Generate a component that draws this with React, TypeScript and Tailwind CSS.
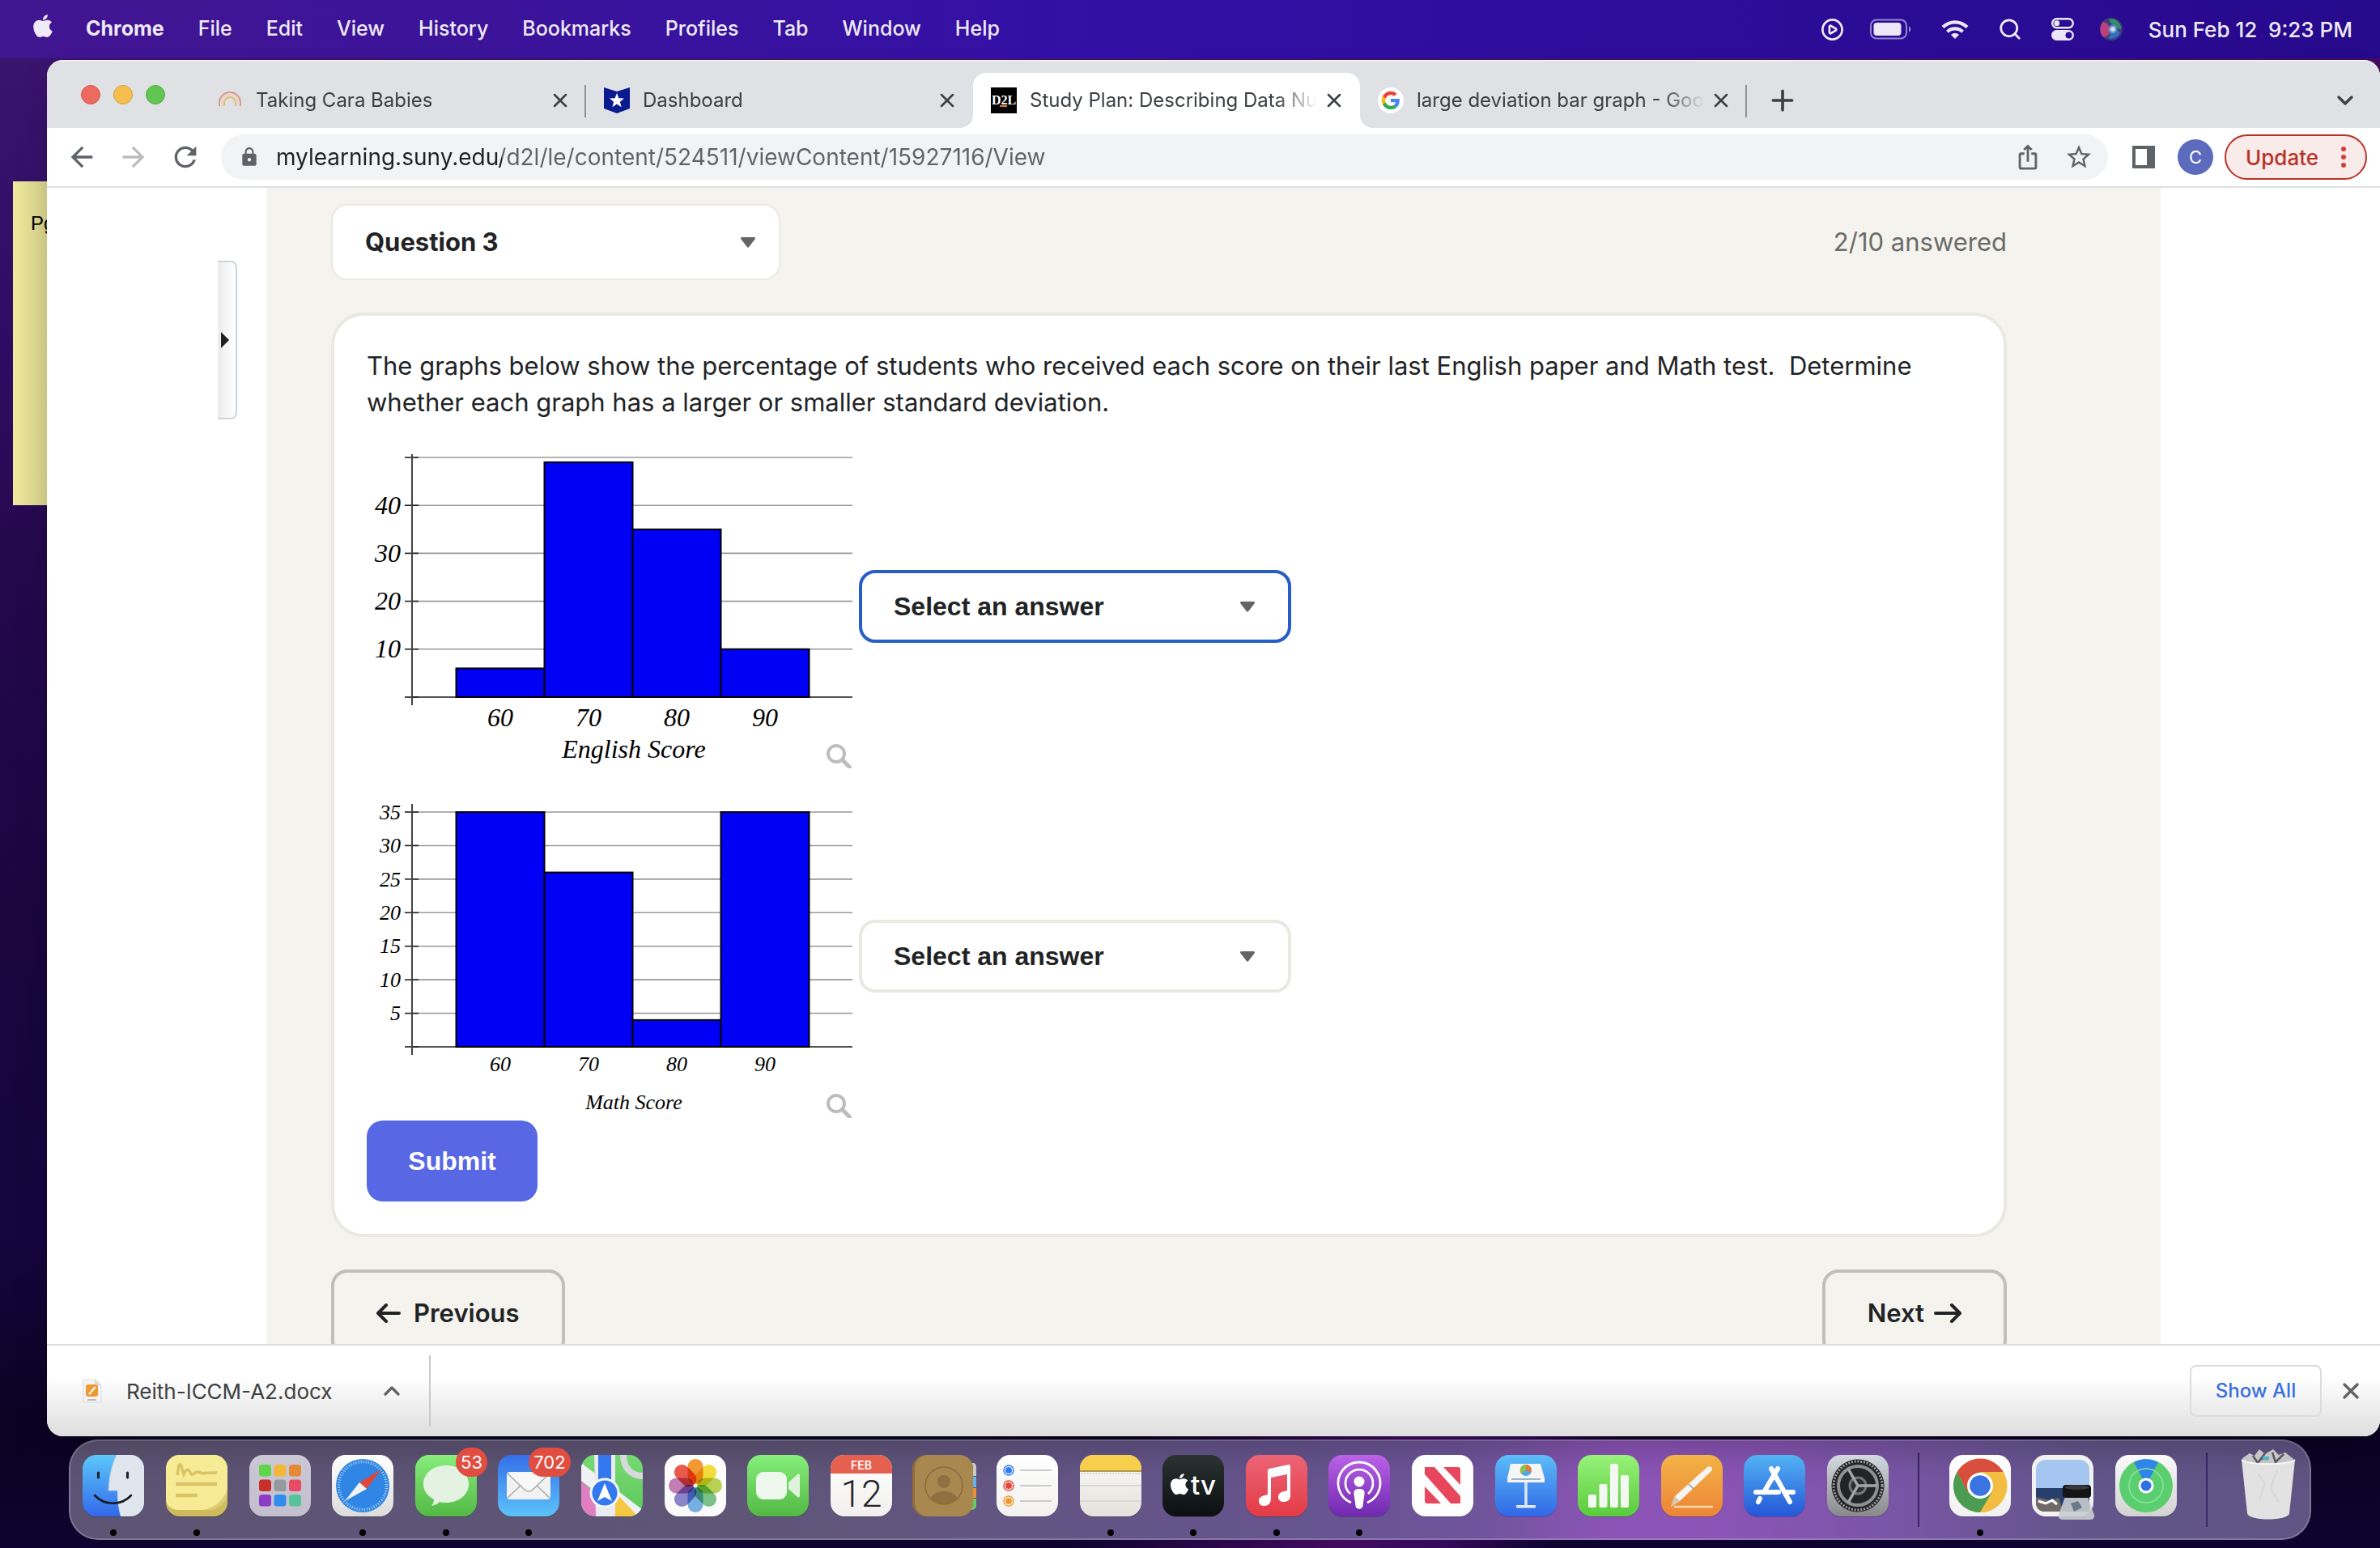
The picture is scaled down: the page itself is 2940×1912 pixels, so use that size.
import React from 'react';
import { ChevronDown, ChevronUp, CirclePlay, Plus, Search, X } from 'lucide-react';
import { FaApple } from 'react-icons/fa';
import { MdArrowBack, MdArrowForward, MdIosShare, MdLock, MdRefresh, MdStarOutline } from 'react-icons/md';

const menus = ['File', 'Edit', 'View', 'History', 'Bookmarks', 'Profiles', 'Tab', 'Window', 'Help'];

/* ---------- menu bar ---------- */

const BatteryIcon = () => (
  <svg width="52" height="26" viewBox="0 0 52 26" fill="none">
    <rect x="1" y="1.500" width="44" height="23" rx="7" stroke="#fff" strokeOpacity="0.5" strokeWidth="2" />
    <rect x="4.500" y="5" width="34" height="16" rx="4" fill="#ebe7f6" />
    <path d="M48 9.500c3 1 3 6 0 7z" fill="#fff" fillOpacity="0.5" />
  </svg>
);

const WifiIcon = () => (
  <svg width="34" height="25" viewBox="0 0 34 25" fill="none" stroke="#ebe7f6" strokeWidth="4.200">
    <path d="M2 9.500C10.500 1.200 23.500 1.200 32 9.500" />
    <path d="M7.500 15.200c5.400-5 13.600-5 19 0" />
    <path d="M17 24l-5-5c2.800-2.600 7.200-2.600 10 0z" fill="#ebe7f6" stroke="none" />
  </svg>
);

const ControlCenterIcon = () => (
  <svg width="28" height="28" viewBox="0 0 28 28" fill="none">
    <rect x="1.200" y="1.200" width="25.600" height="11" rx="5.500" stroke="#ebe7f6" strokeWidth="2.400" />
    <circle cx="6.800" cy="6.700" r="3.400" fill="#ebe7f6" />
    <rect y="15" width="28" height="13" rx="6.500" fill="#ebe7f6" />
    <circle cx="21.500" cy="21.500" r="4" fill="#2a0a98" />
  </svg>
);

const SiriIcon = () => (
  <svg width="28" height="28" viewBox="0 0 28 28">
    <defs>
      <radialGradient id="siri-glow">
        <stop offset="0" stopColor="#fff" />
        <stop offset="0.35" stopColor="#9fd3f5" stopOpacity="0.9" />
        <stop offset="1" stopColor="#2b3f8e" stopOpacity="0" />
      </radialGradient>
    </defs>
    <circle cx="14" cy="14" r="14" fill="#3c3f77" />
    <path d="M4 5A13 13 0 0 0 5 24c6-2 9-6 8-10S8 6 4 5z" fill="#d6417f" fillOpacity="0.85" />
    <path d="M11 1.500c9-2 16 6 15 13-5-2-12-5-15-13z" fill="#2f9d6a" fillOpacity="0.85" />
    <path d="M13 15c5-1 10 0 12 3-3 7-10 9-15 7 3-3 4-6 3-10z" fill="#2c7bd0" fillOpacity="0.85" />
    <circle cx="16" cy="14" r="8" fill="url(#siri-glow)" />
  </svg>
);

const MenuBar = () => (
  <header className="flex h-[72px] shrink-0 items-center bg-linear-to-r from-[#421590] via-[#3310a6] via-45% to-[#27098c] pl-10 pr-[34px] text-[25px] text-[#efebf8]">
    <FaApple className="mr-10 -mt-2 h-[32px] w-[26px]" />
    <nav className="flex items-center gap-[42px]">
      <button className="font-bold">Chrome</button>
      {menus.map((m) => (
        <button key={m} className="font-medium">{m}</button>
      ))}
    </nav>
    <div className="ml-auto flex items-center">
      <CirclePlay size={29} strokeWidth={2.2} className="mr-8" />
      <span className="mr-9"><BatteryIcon /></span>
      <span className="mr-9"><WifiIcon /></span>
      <Search size={30} strokeWidth={2.2} className="mr-9" />
      <span className="mr-8"><ControlCenterIcon /></span>
      <span className="mr-8"><SiriIcon /></span>
      <span className="whitespace-pre text-[26px] font-medium">Sun Feb 12  9:23 PM</span>
    </div>
  </header>
);

/* ---------- browser tabs ---------- */

const RainbowFavicon = () => (
  <svg width="32" height="32" viewBox="0 0 32 32" fill="none" strokeWidth="2">
    <path d="M3 23v-4a13 13 0 0 1 26 0v4" stroke="#dc9a86" />
    <path d="M6 23v-4a10 10 0 0 1 20 0v4" stroke="#eed3c2" />
    <path d="M9 23v-4a7 7 0 0 1 14 0v4" stroke="#e2bd80" />
  </svg>
);

const StarFavicon = () => (
  <svg width="32" height="32" viewBox="0 0 32 32">
    <path d="M0 0l16 5 16-5v26l-16 6-16-6z" fill="#0a1a8f" />
    <path d="M16 7l2.400 6.200 6.600.3-5.100 4.200 1.700 6.500L16 20.500l-5.600 3.700 1.700-6.500L7 13.500l6.600-.3z" fill="#fff" />
  </svg>
);

const D2LFavicon = () => (
  <svg width="32" height="32" viewBox="0 0 32 32">
    <rect width="32" height="32" fill="#000" />
    <text x="16" y="21" fontSize="16" fontWeight="700" fill="#fff" textAnchor="middle" className="font-['Liberation_Serif',serif]">D2L</text>
    <rect x="11" y="22" width="9" height="2" fill="#e8792b" />
  </svg>
);

const GoogleFavicon = () => (
  <svg width="32" height="32" viewBox="-10 -10 68 68">
    <circle cx="24" cy="24" r="34" fill="#fff" />
    <path fill="#EA4335" d="M24 9.500c3.540 0 6.710 1.220 9.210 3.600l6.850-6.850C35.900 2.380 30.470 0 24 0 14.620 0 6.510 5.380 2.560 13.220l7.980 6.190C12.430 13.720 17.740 9.500 24 9.500z" />
    <path fill="#4285F4" d="M46.980 24.550c0-1.570-.15-3.090-.38-4.550H24v9.020h12.940c-.58 2.960-2.260 5.480-4.780 7.180l7.730 6c4.510-4.180 7.090-10.360 7.090-17.650z" />
    <path fill="#FBBC05" d="M10.530 28.590c-.48-1.450-.76-2.990-.76-4.590s.27-3.140.76-4.590l-7.980-6.190C.92 16.460 0 20.120 0 24c0 3.880.92 7.540 2.560 10.780l7.970-6.190z" />
    <path fill="#34A853" d="M24 48c6.480 0 11.930-2.130 15.890-5.810l-7.730-6c-2.150 1.450-4.920 2.300-8.160 2.300-6.260 0-11.570-4.220-13.470-9.910l-7.980 6.190C6.510 42.620 14.620 48 24 48z" />
  </svg>
);

interface BrowserTab {
  title: string;
  icon: React.ReactNode;
  active?: boolean;
  divider?: boolean;
}

const tabs: BrowserTab[] = [
  { title: 'Taking Cara Babies', icon: <RainbowFavicon />, divider: true },
  { title: 'Dashboard', icon: <StarFavicon /> },
  { title: 'Study Plan: Describing Data Nu', icon: <D2LFavicon />, active: true },
  { title: 'large deviation bar graph - Goo', icon: <GoogleFavicon />, divider: true },
];

const TabFlare = ({ side }: { side: 'left' | 'right' }) => (
  <svg
    width="16"
    height="16"
    viewBox="0 0 16 16"
    className={side === 'left' ? 'absolute bottom-0 right-full' : 'absolute bottom-0 left-full'}
  >
    <path d={side === 'left' ? 'M16 0v16H0C9 16 16 9 16 0z' : 'M0 0v16h16C7 16 0 9 0 0z'} fill="#fff" />
  </svg>
);

const TabStrip = () => (
  <div className="flex h-[84px] shrink-0 items-center border-t-2 border-[#f0f0f2] bg-[#dfe1e5] pl-[42px] pr-[27px]">
    <div className="flex w-[146px] shrink-0 gap-4">
      <button aria-label="Close window" className="h-6 w-6 rounded-full border border-[#d8574c] bg-[#ed6a5e]" />
      <button aria-label="Minimize window" className="h-6 w-6 rounded-full border border-[#dba03a] bg-[#f5bf4f]" />
      <button aria-label="Zoom window" className="h-6 w-6 rounded-full border border-[#4fae3d] bg-[#61c554]" />
    </div>
    {tabs.map((tab) => (
      <div
        key={tab.title}
        className={`relative mt-3.5 flex h-[68px] w-[478px] items-center pl-[22px] pr-[18px] text-[#3c4043] ${tab.active ? 'rounded-t-2xl bg-white' : ''}`}
      >
        {tab.icon}
        <span className="ml-4 flex-1 whitespace-nowrap text-[24px] [mask-image:linear-gradient(to_right,#000_84%,transparent_98%)]">
          {tab.title}
        </span>
        <button aria-label={`Close ${tab.title}`}>
          <X size={28} strokeWidth={2.2} />
        </button>
        {tab.active && <TabFlare side="left" />}
        {tab.active && <TabFlare side="right" />}
        {tab.divider && <span className="absolute right-0 top-[15px] h-10 w-0.5 bg-[#8f9195]" />}
      </div>
    ))}
    <button aria-label="New tab" className="ml-6 mt-3.5 text-[#3c4043]">
      <Plus size={40} strokeWidth={2.2} />
    </button>
    <button aria-label="Search tabs" className="ml-auto mt-3.5 text-[#3c4043]">
      <ChevronDown size={32} strokeWidth={2.5} />
    </button>
  </div>
);

const Toolbar = () => (
  <div className="flex h-[74px] shrink-0 items-center border-b-2 border-[#dcdfe0] bg-white pl-[23px] pr-4 text-[#5f6368]">
    <div className="mr-6 flex gap-6">
      <button aria-label="Back"><MdArrowBack size={40} /></button>
      <button aria-label="Forward" className="text-[#babcbe]"><MdArrowForward size={40} /></button>
      <button aria-label="Reload"><MdRefresh size={40} /></button>
    </div>
    <div className="flex h-14 flex-1 items-center rounded-full bg-[#f1f3f4] pl-[22px] pr-[18px]">
      <MdLock size={26} />
      <input
        aria-label="Address"
        defaultValue="mylearning.suny.edu/d2l/le/content/524511/viewContent/15927116/View"
        className="ml-5 h-full flex-1 bg-[linear-gradient(to_right,#202124_279px,#5f6368_279px)] bg-clip-text text-[28px] text-transparent outline-none"
      />
      <button aria-label="Share" className="mr-7"><MdIosShare size={34} /></button>
      <button aria-label="Bookmark"><MdStarOutline size={36} /></button>
    </div>
    <button aria-label="Side panel" className="ml-[30px]">
      <svg width="28" height="28" viewBox="0 0 28 28">
        <path d="M0 0h28v28H0zM4 4v20h14V4z" fill="#5f6368" fillRule="evenodd" />
      </svg>
    </button>
    <button className="ml-7 h-11 w-11 rounded-full bg-[#5c6bbd] text-[22px] text-white">C</button>
    <button className="ml-3.5 flex h-14 w-44 items-center justify-between rounded-full border-2 border-[#b93126] bg-[#f9ebea] pl-6 pr-6 text-[26px] font-medium text-[#b93126]">
      Update
      <svg width="6" height="28" viewBox="0 0 6 28" fill="#d33f33">
        <circle cx="3" cy="4" r="3" />
        <circle cx="3" cy="14" r="3" />
        <circle cx="3" cy="24" r="3" />
      </svg>
    </button>
  </div>
);

/* ---------- question page ---------- */

interface HistogramProps {
  title: string;
  values: number[];
  step: number;
  max: number;
  top: number;
  bottom: number;
  axisTop: number;
  fontSize: number;
  lastLabel: number;
  labelY: number;
  titleY: number;
}

const Histogram: React.FC<HistogramProps> = ({ title, values, step, max, top, bottom, axisTop, fontSize, lastLabel, labelY, titleY }) => {
  const axisX = 56;
  const barWidth = 109;
  const y = (v: number) => bottom - (v / max) * (bottom - top);
  const ticks = Array.from({ length: max / step + 1 }, (_, i) => i * step);

  return (
    <svg width="600" height="400" viewBox="0 0 600 400" fontSize={fontSize} className="shrink-0 font-['Liberation_Serif',serif] italic">
      {ticks.map((t) => (
        <g key={t}>
          <path d={`M${axisX} ${y(t)}H600`} stroke={t === 0 ? '#555' : '#999'} strokeWidth={t === 0 ? 2 : 1.6} />
          <path d={`M47 ${y(t)}h17`} stroke="#222" strokeWidth="1.600" />
          {t > 0 && t <= lastLabel && (
            <text x="42" y={y(t) + fontSize / 3} textAnchor="end">{t}</text>
          )}
        </g>
      ))}
      <path d={`M${axisX} ${axisTop}V${bottom + 10}`} stroke="#444" strokeWidth="2" />
      {values.map((v, i) => (
        <g key={i}>
          <rect x={110.5 + i * barWidth} y={y(v)} width={barWidth} height={bottom - y(v)} fill="#0000f5" stroke="#000" strokeWidth="2" />
          <text x={165 + i * barWidth} y={labelY} textAnchor="middle">{60 + i * 10}</text>
        </g>
      ))}
      <text x="330" y={titleY} textAnchor="middle">{title}</text>
      <circle cx="580" cy={382} r="10" fill="none" stroke="#bdbdbd" strokeWidth="4" />
      <path d="M587 389l11 11" stroke="#bdbdbd" strokeWidth="5" />
    </svg>
  );
};

const Caret = () => (
  <svg width="18" height="13" viewBox="0 0 18 13">
    <path d="M1.500 0h15c1.200 0 1.800 1.200 1.200 2.200L10.200 12c-.6.9-1.800.9-2.400 0L.3 2.200C-.3 1.200.300 0 1.500 0z" fill="#636466" />
  </svg>
);

const AnswerSelect = ({ label, focused }: { label: string; focused?: boolean }) => (
  <div className="relative ml-2 w-[534px]">
    <select
      aria-label={label}
      className={`h-[90px] w-full appearance-none rounded-[20px] border-4 bg-white pl-[39px] font-['Liberation_Sans',sans-serif] text-[32px] font-bold text-[#212325] outline-none ${focused ? 'border-[#265dc8]' : 'border-[#e9e8e2]'}`}
    >
      <option>Select an answer</option>
      <option>Larger standard deviation</option>
      <option>Smaller standard deviation</option>
    </select>
    <span className="pointer-events-none absolute inset-y-0 right-[45px] flex items-center"><Caret /></span>
  </div>
);

const QuestionPage = () => (
  <main className="flex-1 bg-[#f4f3ee] pl-20 pr-[190px] pt-5 text-[#212325]">
    <div className="flex items-center justify-between">
      <div className="relative w-[555px]">
        <select
          aria-label="Question"
          className="h-[94px] w-full appearance-none rounded-[20px] border-2 border-[#e9e8e2] bg-white pl-10 text-[31px] font-bold outline-none"
        >
          <option>Question 3</option>
        </select>
        <span className="pointer-events-none absolute inset-y-0 right-[31px] flex items-center"><Caret /></span>
      </div>
      <p className="text-[31px] text-[#6a6b6a]">2/10 answered</p>
    </div>

    <section className="mt-10 rounded-[40px] border-4 border-[#e9e8e2] bg-white px-10 pb-10 pt-[39px]">
      <p className="max-w-[1960px] text-[31px] leading-[45px]">
        The graphs below show the percentage of students who received each score on their last English paper and Math test.&nbsp; Determine whether each graph has a larger or smaller standard deviation.
      </p>
      <div className="mt-[30px] flex items-center">
        <Histogram title="English Score" values={[6, 49, 35, 10]} step={10} max={50} lastLabel={40} top={16} bottom={312} axisTop={12} fontSize={32} labelY={348} titleY={387} />
        <AnswerSelect label="English score deviation" focused />
      </div>
      <div className="mt-8 flex items-center">
        <Histogram title="Math Score" values={[35, 26, 4, 35]} step={5} max={35} lastLabel={35} top={22} bottom={312} axisTop={12} fontSize={26} labelY={342} titleY={389} />
        <AnswerSelect label="Math score deviation" />
      </div>
      <button className="mt-[3px] block h-[100px] w-[211px] rounded-[20px] bg-[#5867e3] font-['Liberation_Sans',sans-serif] text-[32px] font-bold text-white">
        Submit
      </button>
    </section>

    <div className="mt-10 flex justify-between text-[31px] font-semibold">
      <button className="flex h-[108px] items-center gap-4 rounded-[20px] border-4 border-[#c2bfba] px-[52px]">
        <svg width="30" height="24" viewBox="0 0 30 24" fill="none" stroke="#212325" strokeWidth="4" strokeLinecap="round" strokeLinejoin="round">
          <path d="M28 12H2M12 2L2 12l10 10" />
        </svg>
        Previous
      </button>
      <button className="flex h-[108px] items-center gap-3 rounded-[20px] border-4 border-[#c2bfba] px-[52px]">
        Next
        <svg width="34" height="24" viewBox="0 0 34 24" fill="none" stroke="#212325" strokeWidth="4" strokeLinecap="round" strokeLinejoin="round">
          <path d="M2 12h30M22 2l10 10-10 10" />
        </svg>
      </button>
    </div>
  </main>
);

const DownloadBar = () => (
  <footer className="flex h-[114px] shrink-0 items-center border-t-2 border-[#dadcdc] bg-linear-to-b from-white from-35% to-[#dedede] pl-11 pr-5">
    <svg width="24" height="30" viewBox="0 0 24 30">
      <path d="M1 0h14l8 8v21H1z" fill="#f4f4f4" stroke="#ddd" />
      <path d="M15 0v8h8z" fill="#dcdcdc" />
      <rect x="4" y="7" width="15" height="15" rx="3" fill="#ee9834" />
      <path d="M8 19l8-9" stroke="#fff" strokeWidth="2" />
      <path d="M6 26h11" stroke="#bbb" strokeWidth="2" />
    </svg>
    <a href="#download" className="ml-[30px] text-[26px] text-[#3c4043]">Reith-ICCM-A2.docx</a>
    <button aria-label="Download options" className="ml-[58px] text-[#5f6368]"><ChevronUp size={32} strokeWidth={2.5} /></button>
    <span className="ml-[30px] h-[88px] w-0.5 bg-[#c9c9c9]" />
    <button className="ml-auto h-16 w-[163px] rounded-lg border-2 border-[#dadce0] text-[24px] font-medium text-[#3770e0]">Show All</button>
    <button aria-label="Close downloads bar" className="ml-5 text-[#5f6368]"><X size={32} strokeWidth={2.5} /></button>
  </footer>
);

/* ---------- dock ---------- */

interface TileProps {
  id: string;
  from: string;
  to: string;
  children?: React.ReactNode;
}

const Tile: React.FC<TileProps> = ({ id, from, to, children }) => (
  <svg width="76" height="76" viewBox="0 0 76 76" overflow="visible">
    <defs>
      <linearGradient id={`${id}-bg`} x2="0" y2="1">
        <stop offset="0" stopColor={from} />
        <stop offset="1" stopColor={to} />
      </linearGradient>
      <clipPath id={`${id}-clip`}>
        <rect width="76" height="76" rx="17" />
      </clipPath>
    </defs>
    <rect y="1" width="76" height="76" rx="17" fill="#000" fillOpacity="0.2" />
    <g clipPath={`url(#${id}-clip)`}>
      <rect width="76" height="76" fill={`url(#${id}-bg)`} />
      {children}
    </g>
  </svg>
);

const Finder = () => (
  <Tile id="finder" from="#5cc8fa" to="#3268ea">
    <path d="M42 0C36 12 33 26 32 44h11c0 12 1 22 4 32h29V0z" fill="#e1e6ee" />
    <path d="M42 0C36 12 33 26 32 44h11" fill="none" stroke="#b9c9dc" />
    <path d="M19.500 22v6M55.500 22v6" stroke="#1d2733" strokeWidth="3.200" strokeLinecap="round" />
    <path d="M15 50c12 13 33 13 45 0" fill="none" stroke="#161c26" strokeWidth="2.600" strokeLinecap="round" />
  </Tile>
);

const Stickies = () => (
  <Tile id="stickies" from="#e0cf74" to="#cdb95c">
    <path d="M0 0h76v48c-2 10-10 19-22 20H16C6 68 0 62 0 54z" fill="#f8eb96" />
    <path d="M76 42C70 58 60 66 44 68h12c10-1 18-10 20-20z" fill="#dccb71" />
    <path d="M14 25l2-12c1-2 3-1 3 1l3 10c3-7 6-7 8-2 1 3 3 3 6 0 3-2 6-1 9 1 5-1 10-1 18-1" fill="none" stroke="#d9c468" strokeWidth="3.500" />
    <path d="M12 36h51M12 50h27" stroke="#d9c468" strokeWidth="4.500" />
  </Tile>
);

const launchpadColors = ['#5fd64a', '#f3b73a', '#e58a34', '#c9302a', '#94999c', '#ea4a63', '#8d3bc7', '#2f8cf0', '#57c39a'];

const Launchpad = () => (
  <Tile id="launchpad" from="#cbc8d6" to="#c3bfce">
    {launchpadColors.map((c, i) => (
      <rect key={c} x={12 + (i % 3) * 18.5} y={12 + Math.floor(i / 3) * 18.5} width="15" height="14.500" rx="3.500" fill={c} />
    ))}
  </Tile>
);

const Safari = () => (
  <Tile id="safari" from="#ffffff" to="#dcdcdc">
    <circle cx="38" cy="38" r="33" fill="#2f86e4" />
    <circle cx="38" cy="38" r="29.500" fill="none" stroke="#d5e8fa" strokeOpacity="0.8" strokeWidth="3.500" strokeDasharray="1 2.100" />
    <path d="M61 18L43 42l-9-8z" fill="#e0473c" />
    <path d="M16 57l18-23 9 8z" fill="#f2f2f2" />
  </Tile>
);

const Messages = () => (
  <Tile id="messages" from="#86ee7b" to="#53b944">
    <path d="M38 13c16 0 28 10 28 23S54 59 38 59c-3 0-6 0-8-1-3 3-6 4-10 5 2-3 3-5 3-8-8-4-13-11-13-19 0-13 12-23 28-23z" fill="#e4f3e1" />
  </Tile>
);

const Mail = () => (
  <Tile id="mail" from="#356eea" to="#5cc3f8">
    <rect x="11" y="21" width="54" height="34" rx="4" fill="#f2f2f2" />
    <path d="M12 53l19-18M64 53L45 35" stroke="#a9a9a9" strokeWidth="1.500" />
    <path d="M12 23l20 19c4 4 8 4 12 0l20-19" fill="#f8f8f8" stroke="#a9a9a9" strokeWidth="1.500" />
  </Tile>
);

const Maps = () => (
  <Tile id="maps" from="#76da72" to="#5fc75d">
    <path d="M0 32l30 28v16H0z" fill="#e07fc1" />
    <path d="M0 10l76 58v8H58L0 32z" fill="#f0f1f5" />
    <path d="M42 46l28 30H42z" fill="#f5c842" />
    <path d="M16 0h26v76H18z" fill="#e9ebf0" />
    <path d="M21 0h16v40H21z" fill="#3478f0" />
    <path d="M52 0c0 15 9 26 24 26" fill="none" stroke="#d7d9dd" strokeWidth="8" />
    <circle cx="29" cy="47" r="18.500" fill="#f5f7fb" />
    <circle cx="29" cy="47" r="15.500" fill="#3478f0" />
    <path d="M29 35l9 22-9-5-9 5z" fill="#fff" />
  </Tile>
);

const petals = ['#f39a33', '#f4dd3c', '#b9d455', '#7cc48b', '#78b3e4', '#8c86cc', '#c37fb5', '#ea5a4c'];

const Photos = () => (
  <Tile id="photos" from="#ffffff" to="#fafafa">
    {petals.map((c, i) => (
      <rect key={c} x="28.500" y="5" width="19" height="31" rx="9.500" fill={c} transform={`rotate(${i * 45} 38 38)`} className="mix-blend-multiply" />
    ))}
  </Tile>
);

const FaceTime = () => (
  <Tile id="facetime" from="#86ee7b" to="#53b944">
    <rect x="11" y="21" width="38" height="34" rx="9" fill="#eef8ec" />
    <path d="M51 34l11-10c2-1 3 0 3 2v24c0 2-1 3-3 2L51 42z" fill="#dff2dc" />
  </Tile>
);

const CalendarIcon = () => (
  <Tile id="calendar" from="#ffffff" to="#f1f0ee">
    <rect width="76" height="23" fill="#e5604f" />
    <text x="38" y="18" fontSize="14" fontWeight="600" fill="#fff" textAnchor="middle">FEB</text>
    <text x="38" y="64" fontSize="46" fontWeight="300" fill="#262626" textAnchor="middle" className="font-[Roboto,sans-serif]">12</text>
  </Tile>
);

const Contacts = () => (
  <svg width="79" height="76" viewBox="0 0 79 76">
    <path d="M68 10h7q4 0 4 5v11H68z" fill="#c9c9c5" />
    <path d="M68 27h11v13H68z" fill="#64b5e8" />
    <path d="M68 41h11v12H68z" fill="#ea8f33" />
    <path d="M68 54h11v8q0 5-5 6h-6z" fill="#69cc63" />
    <rect width="75" height="76" rx="17" fill="#8f6c38" />
    <rect x="3" width="72" height="76" rx="17" fill="#a98850" />
    <circle cx="39" cy="38" r="23" fill="none" stroke="#8a6a3b" strokeWidth="1.500" />
    <circle cx="39" cy="33" r="8" fill="#8f7040" />
    <path d="M23 53c6-11 26-11 32 0-8 10-24 10-32 0z" fill="#8f7040" />
  </svg>
);

const reminderDots = ['#2f7bf0', '#e0473c', '#ee9a35'];

const Reminders = () => (
  <Tile id="reminders" from="#ffffff" to="#f2f1ef">
    {reminderDots.map((c, i) => (
      <g key={c}>
        <circle cx="15" cy={19 + i * 19} r="6" fill="#fff" stroke={c} strokeWidth="1.500" />
        <circle cx="15" cy={19 + i * 19} r="4" fill={c} />
        <path d={`M29 ${19 + i * 19}h39`} stroke="#bdbdc1" strokeWidth="1.600" />
      </g>
    ))}
  </Tile>
);

const Notes = () => (
  <Tile id="notes" from="#fafaf8" to="#e3e2dd">
    <rect width="76" height="19" fill="#f8cf4c" />
    <path d="M0 20h76" stroke="#b09a52" strokeWidth="2" />
    <path d="M2 23h74" stroke="#c4c4c0" strokeWidth="1.500" strokeDasharray="1.500 2" />
    <path d="M0 38h76M0 57h76" stroke="#d3d2cd" strokeWidth="1.500" />
  </Tile>
);

const AppleTV = () => (
  <Tile id="tv" from="#2a3332" to="#0c0f12">
    <FaApple x="6" y="21" size={30} color="#fff" />
    <text x="35" y="49" fontSize="33" fontWeight="500" fill="#fff">tv</text>
  </Tile>
);

const Music = () => (
  <Tile id="music" from="#ec6577" to="#e33b45">
    <path d="M27 19c0-1 1-2 2-2l24-5c1.500 0 2 .5 2 2v36c0 5-3 8-8 8-4 0-7-2-7-6s3-6 7-7l4-1V24l-20 4v26c0 5-3 9-8 9-4 0-7-2-7-6s3-6 7-7l4-1z" fill="#fff" />
  </Tile>
);

const Podcasts = () => (
  <Tile id="podcasts" from="#bb62e8" to="#6f28ae">
    <g fill="none" stroke="#fff" strokeWidth="2.800">
      <path d="M28 59a26 26 0 1 1 20 0" />
      <path d="M27 48a17 17 0 1 1 22 0" />
    </g>
    <circle cx="38" cy="33" r="6.500" fill="#fff" />
    <path d="M38 42c5 0 7 2 6.500 6l-2 15c-.5 5-8.500 5-9 0l-2-15C31 44 33 42 38 42z" fill="#fff" />
  </Tile>
);

const News = () => (
  <Tile id="news" from="#ffffff" to="#fcfcfc">
    <path d="M16 15h12l32 36v9H48L16 24z" fill="#e8465d" />
    <path d="M39 15h18c2 0 3 1 3 3v19zM16 39v18c0 2 1 3 3 3h17z" fill="#e8465d" />
  </Tile>
);

const Keynote = () => (
  <Tile id="keynote" from="#5cbdf8" to="#3067e6">
    <path d="M19 11h37l5 18v5H15v-5z" fill="#f5f5f5" />
    <path d="M20 30h36" stroke="#9ab2cc" strokeWidth="2" />
    <circle cx="38" cy="19" r="7" fill="#4aa7e8" />
    <path d="M38 19v-7a7 7 0 0 1 6 10z" fill="#e8793b" />
    <path d="M38 19l-6 4a7 7 0 0 1 6-11z" fill="#8fc24c" />
    <path d="M38 34v29" stroke="#dfe6ee" strokeWidth="3.500" />
    <rect x="26" y="62" width="24" height="3.500" rx="1" fill="#e4e8ee" />
  </Tile>
);

const Numbers = () => (
  <Tile id="numbers" from="#98f27a" to="#5acb3c">
    <g fill="#f4f8f2">
      <rect x="13" y="49" width="10" height="16" rx="2" />
      <rect x="26.500" y="36" width="10" height="29" rx="2" />
      <rect x="40" y="11" width="10" height="54" rx="2" />
      <rect x="53" y="25" width="10" height="40" rx="2" />
    </g>
  </Tile>
);

const Pages = () => (
  <Tile id="pages" from="#f3b347" to="#ec8537">
    <path d="M16 64h48" stroke="#fbd9ac" strokeWidth="2.500" />
    <path d="M12 64l5-13 39-35c4-4 9-1 6 4L23 57z" fill="#f6f4f1" />
    <path d="M12 64l5-13 6 6z" fill="#d9c8b2" />
    <path d="M34 36l6 6" stroke="#9a9a9a" strokeWidth="1.500" />
  </Tile>
);

const AppStore = () => (
  <Tile id="appstore" from="#52b3f2" to="#2456d8">
    <g stroke="#fff" strokeWidth="6" strokeLinecap="round">
      <path d="M42 17L25 46M34 17l23 41M15 46h28M53 46h8M20 54l-2 4" />
    </g>
  </Tile>
);

const Settings = () => (
  <Tile id="settings" from="#d3dbe0" to="#88888a">
    <circle cx="38" cy="38" r="32.500" fill="#232426" />
    <circle cx="38" cy="38" r="30" fill="none" stroke="#9a9b9c" strokeWidth="3" strokeDasharray="2 1.800" />
    <circle cx="38" cy="38" r="24" fill="none" stroke="#8f9091" strokeWidth="4" />
    <circle cx="38" cy="38" r="10" fill="#2c2d2f" stroke="#747576" strokeWidth="3" />
    <path d="M38 38h24M38 38L26 17M38 38L26 59" stroke="#a5a6a7" strokeWidth="3.500" />
  </Tile>
);

const Chrome = () => (
  <Tile id="chrome" from="#ffffff" to="#f1f1f1">
    <circle cx="38" cy="38" r="33" fill="#f3bd42" />
    <path d="M38 21h28.700A33 33 0 0 0 9.400 21.500L23 46z" fill="#d94f3d" />
    <path d="M9.400 21.500A33 33 0 0 0 38 71l15-25.500L38 54l-15-8z" fill="#4b9b52" />
    <path d="M53 46.500L38 71a33 33 0 0 0 28.700-50H38z" fill="#f3bd42" />
    <circle cx="38" cy="38" r="16" fill="#fff" />
    <circle cx="38" cy="38" r="12.800" fill="#3a74e0" />
  </Tile>
);

const Preview = () => (
  <svg width="76" height="76" viewBox="0 0 76 76" overflow="visible">
    <rect width="76" height="76" rx="17" fill="#f2f2f1" />
    <rect x="5" y="6" width="66" height="64" rx="12" fill="#a6c6f2" />
    <path d="M5 41h66v29H17C9 70 5 66 5 58z" fill="#27406b" />
    <path d="M5 52l16 4 12-3 6 17H17C9 70 5 66 5 58z" fill="#6f6a66" />
    <path d="M8 57l9 3 8-4 6 5" fill="none" stroke="#fff" strokeWidth="3" />
    <path d="M41 52h28l8 22q1 6-6 6H39q-7 0-6-6z" fill="#c9ccd0" fillOpacity="0.9" />
    <path d="M48 60l9-3 5 8-10 5z" fill="#6e7988" />
    <rect x="38" y="37" width="35" height="16" rx="4" fill="#151515" />
    <ellipse cx="55.500" cy="40" rx="15" ry="3" fill="#3a3a3a" />
  </svg>
);

const FindMy = () => (
  <Tile id="findmy" from="#fbfbfb" to="#d2d2d2">
    <circle cx="38" cy="38" r="33" fill="#5bcf70" />
    <path d="M38 38L23 9a33 33 0 0 1 30 0z" fill="#2f86e8" />
    <circle cx="38" cy="38" r="21" fill="none" stroke="#8be39a" strokeWidth="1.500" />
    <circle cx="38" cy="38" r="9.500" fill="#fff" />
    <circle cx="38" cy="38" r="6.500" fill="#2f72e4" />
  </Tile>
);

const Trash = () => (
  <svg width="70" height="90" viewBox="0 0 70 90">
    <path d="M3 11L12 5l6 3 6-8 7 6 10-6 7 7 8-3 10 8-3 8H6z" fill="#c6c6c8" />
    <path d="M16 8l6 9 9-12M40 4l4 12 10-10M26 12h9" stroke="#55575c" strokeWidth="2.500" fill="none" />
    <path d="M28 9h8v4h-8z" fill="#4fb8c9" />
    <path d="M2 13c10 7 56 7 66 0l-7 66c-1 10-51 10-52 0z" fill="#e2e2e3" />
    <path d="M2 13c10 7 56 7 66 0" fill="none" stroke="#f7f7f7" strokeWidth="2" />
    <path d="M22 30l9 12-7 20M46 26l-8 22 10 18" stroke="#d7d7d9" strokeWidth="2" fill="none" />
  </svg>
);

interface DockItem {
  name: string;
  icon: React.ReactNode;
  running?: boolean;
  badge?: string;
  separator?: boolean;
}

const dockItems: DockItem[] = [
  { name: 'Finder', icon: <Finder />, running: true },
  { name: 'Stickies', icon: <Stickies />, running: true },
  { name: 'Launchpad', icon: <Launchpad /> },
  { name: 'Safari', icon: <Safari />, running: true },
  { name: 'Messages', icon: <Messages />, running: true, badge: '53' },
  { name: 'Mail', icon: <Mail />, running: true, badge: '702' },
  { name: 'Maps', icon: <Maps /> },
  { name: 'Photos', icon: <Photos /> },
  { name: 'FaceTime', icon: <FaceTime /> },
  { name: 'Calendar', icon: <CalendarIcon /> },
  { name: 'Contacts', icon: <Contacts /> },
  { name: 'Reminders', icon: <Reminders /> },
  { name: 'Notes', icon: <Notes />, running: true },
  { name: 'TV', icon: <AppleTV />, running: true },
  { name: 'Music', icon: <Music />, running: true },
  { name: 'Podcasts', icon: <Podcasts />, running: true },
  { name: 'News', icon: <News /> },
  { name: 'Keynote', icon: <Keynote /> },
  { name: 'Numbers', icon: <Numbers /> },
  { name: 'Pages', icon: <Pages /> },
  { name: 'App Store', icon: <AppStore /> },
  { name: 'System Settings', icon: <Settings />, separator: true },
  { name: 'Google Chrome', icon: <Chrome />, running: true },
  { name: 'Preview', icon: <Preview /> },
  { name: 'Find My', icon: <FindMy />, separator: true },
  { name: 'Trash', icon: <Trash /> },
];

const Dock = () => (
  <footer className="mx-[85px] mb-2.5 mt-1 flex h-[124px] shrink-0 items-center rounded-[36px] border-2 border-white/20 bg-[linear-gradient(to_right,#5d5474_0%,#5f5577_30%,#66548f_55%,#70549c_63%,#8d54b8_69%,#8854b4_75%,#7855a4_82%,#62558a_90%,#605484_100%)] pl-0.5">
    {dockItems.map((item) => (
      <React.Fragment key={item.name}>
        <button aria-label={item.name} className="relative flex h-full flex-1 items-center justify-center pb-2.5">
          {item.icon}
          {item.badge && (
            <span className="absolute right-0 top-2 flex h-9 min-w-9 items-center justify-center rounded-full bg-[#e14d40] px-1.5 text-[22px] text-white">
              {item.badge}
            </span>
          )}
          {item.running && <span className="absolute bottom-[3px] h-2 w-2 rounded-full bg-black" />}
        </button>
        {item.separator && (
          <span className="flex w-12 justify-center">
            <span className="h-[92px] w-0.5 bg-[#3b2467]" />
          </span>
        )}
      </React.Fragment>
    ))}
  </footer>
);

export default function App() {
  return (
    <div className="relative flex h-screen flex-col overflow-hidden bg-[linear-gradient(125deg,transparent_62%,#430b60_70%,#330a5a_73%,transparent_76%),linear-gradient(to_bottom,#3d1570_0%,#2f0c64_22%,#24094d_36%,#1b0640_60%,#16053f_80%,#0b0322_92%,#0e0330_100%)] font-[Inter,sans-serif]">
      <MenuBar />
      <div className="absolute left-4 top-[224px] h-[400px] w-16 bg-linear-to-r from-[#efe99d] to-[#cfc986] pl-[22px] pt-[34px] font-['Liberation_Sans',sans-serif] text-[24px]">
        Pg
      </div>
      <div className="relative ml-[58px] mt-0.5 flex min-h-0 flex-1 flex-col overflow-hidden rounded-[20px] bg-white shadow-2xl">
        <TabStrip />
        <Toolbar />
        <div className="flex min-h-0 flex-1 overflow-hidden">
          <aside className="flex w-[271px] shrink-0 justify-end pr-9 pt-[90px]">
            <button aria-label="Show contents" className="flex h-[196px] w-6 items-center rounded-r-lg border-y-2 border-r-2 border-[#cdd5dc] bg-linear-to-r from-[#ececec] to-white pl-1">
              <svg width="10" height="20" viewBox="0 0 10 20"><path d="M0 0l10 10L0 20z" fill="#212121" /></svg>
            </button>
          </aside>
          <QuestionPage />
          <div className="w-[271px] shrink-0" />
        </div>
        <DownloadBar />
      </div>
      <Dock />
    </div>
  );
}
